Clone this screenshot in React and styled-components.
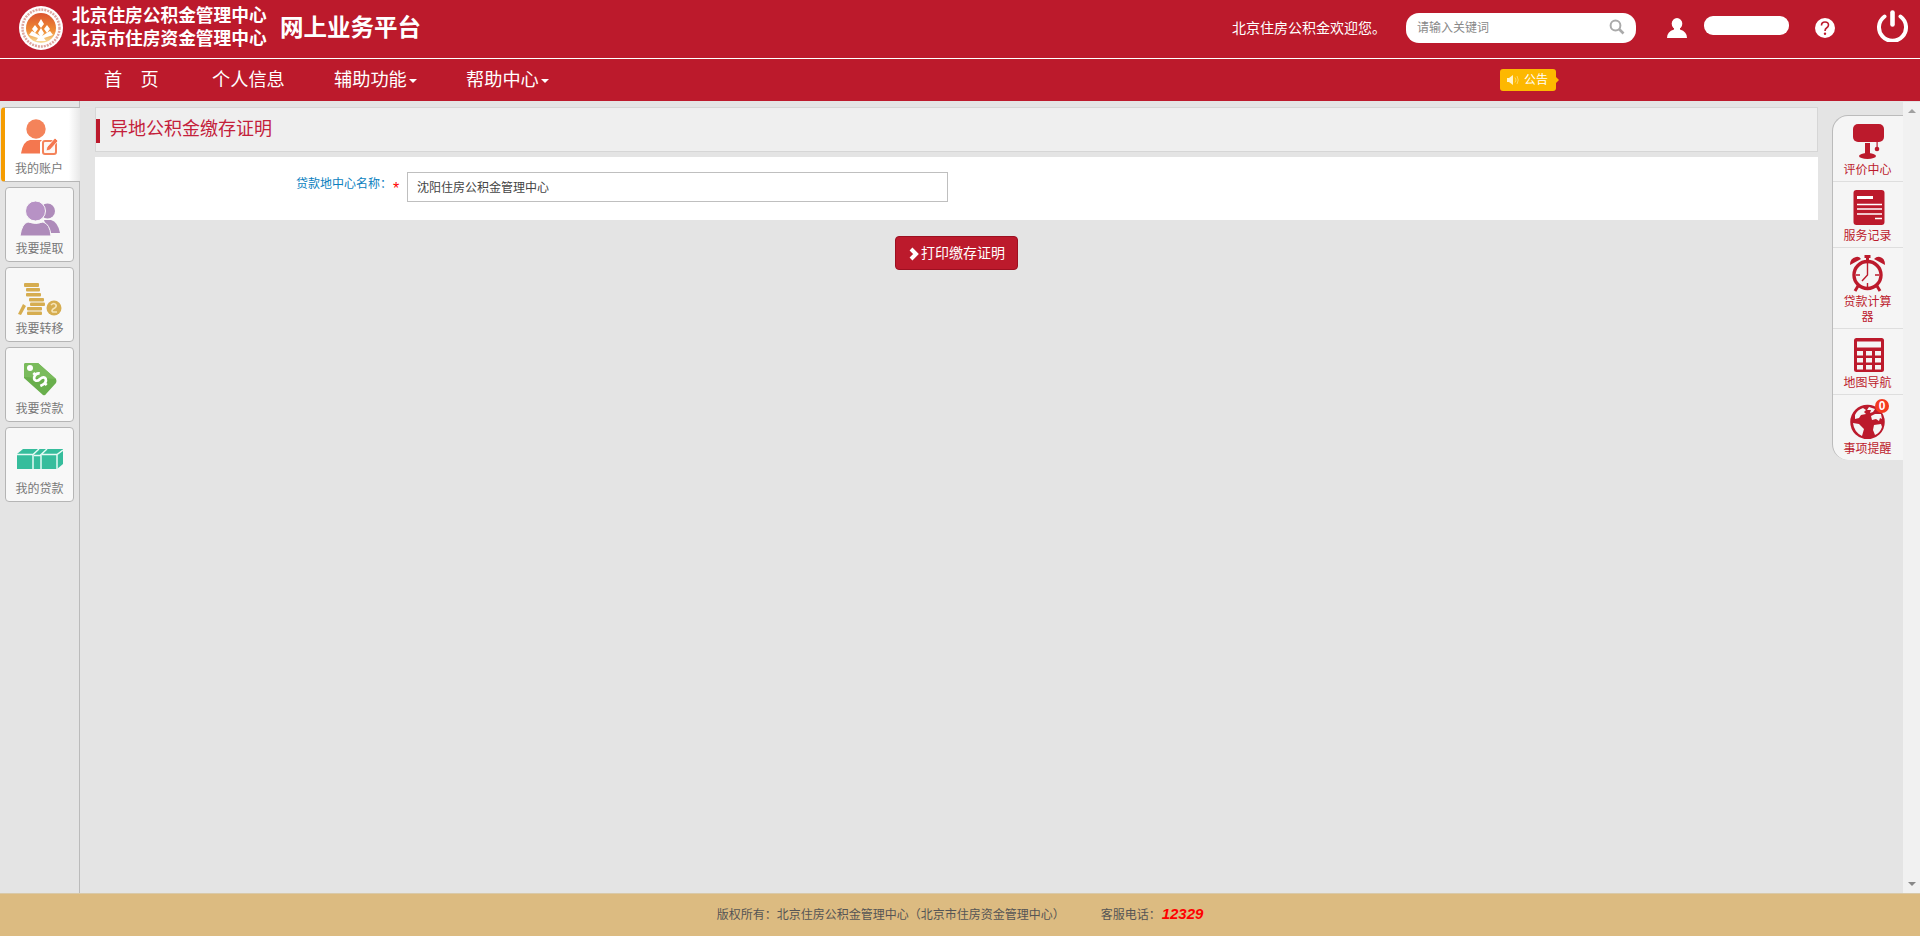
import React from 'react';
import styled, { createGlobalStyle } from 'styled-components';

const RED = '#bc1a2c';

const Global = createGlobalStyle`
  * { box-sizing: border-box; }
  body {
    margin: 0;
    overflow: hidden;
    background: #e4e4e4;
    font: 12px/17px "Liberation Sans", "Noto Sans CJK SC", sans-serif;
    color: #555;
  }
  button, input { font: inherit; }
`;

const Page = styled.div`
  display: flex;
  flex-direction: column;
  height: 936px;
`;

const Header = styled.header`
  display: flex;
  height: 59px;
  padding-left: 19px;
  background: ${RED};
  border-bottom: 1px solid #fff;
  color: #fff;
`;

const Logo = styled.svg`
  width: 44px;
  height: 44px;
  margin-top: 6px;
`;

const Names = styled.div`
  width: 196px;
  margin: 5px 12px 0 9px;
  font-size: 17.7px;
  line-height: 23px;
  font-weight: 700;
  white-space: nowrap;
`;

const Platform = styled.div`
  padding-top: 10px;
  font-size: 23.5px;
  line-height: 36px;
  font-weight: 700;
  white-space: nowrap;
`;

const Tools = styled.div`
  display: flex;
  align-items: flex-start;
  margin-left: auto;
`;

const Welcome = styled.span`
  margin: 20px 20px 0 0;
  font-size: 14px;
  white-space: nowrap;
`;

const Search = styled.label`
  display: flex;
  align-items: center;
  width: 230px;
  height: 30px;
  margin: 13px 31px 0 0;
  padding: 0 11px 0 11px;
  border-radius: 13px;
  background: #fff;
`;

const SearchInput = styled.input`
  flex: 1;
  min-width: 0;
  padding: 0;
  border: 0;
  outline: 0;
  background: none;
  &::placeholder { color: #888; opacity: 1; }
`;

const Icon = styled.svg`
  flex: none;
  display: block;
  width: ${p => p.$w}px;
  height: ${p => p.$h || p.$w}px;
  margin: ${p => p.$m || 0};
`;

const UserName = styled.div`
  width: 85px;
  height: 19px;
  margin: 16px 26px 0 17px;
  border-radius: 9px;
  background: #fff;
`;

const Nav = styled.nav`
  display: flex;
  height: 42px;
  padding-left: 104px;
  background: ${RED};
  color: #fff;
`;

const NavItem = styled.a`
  display: flex;
  align-items: center;
  height: 42px;
  width: ${p => p.$w}px;
  font-size: 18.2px;
  white-space: pre;
`;

const Caret = styled.i`
  margin: 1px 0 0 2px;
  border: 4px solid transparent;
  border-top-color: currentColor;
  border-bottom: 0;
`;

const Notice = styled.div`
  position: relative;
  display: flex;
  align-items: center;
  width: 56px;
  height: 22px;
  margin: 10px 0 0 903px;
  padding-left: 7px;
  gap: 5px;
  border-radius: 3px;
  background: #fdb800;
  &::after {
    content: "";
    position: absolute;
    left: 56px;
    top: 8px;
    border: 3px solid transparent;
    border-left-color: #fdb800;
    border-right: 0;
  }
`;

const Body = styled.div`
  display: flex;
  height: 792px;
`;

const Side = styled.aside`
  display: flex;
  flex-direction: column;
  gap: 5px;
  width: 80px;
  padding-top: 6px;
  border-right: 1px solid #bbb;
`;

const SideItem = styled.a`
  display: flex;
  flex-direction: column;
  align-items: center;
  gap: 3px;
  flex: none;
  height: 75px;
  width: 69px;
  margin-left: 5px;
  padding-top: 8px;
  border: 1px solid #b5b5b5;
  border-radius: 4px;
  background: #f8f8f8;
  color: #777;
  ${p => p.$active && `
    width: 79px;
    margin-left: 1px;
    padding-right: 7px;
    border-left: 4px solid #f59c00;
    border-right: 0;
    border-radius: 4px 0 0 4px;
    background: linear-gradient(90deg, #fff 85%, #e8e8e8);
  `}
`;

const Main = styled.main`
  width: 1723px;
  margin-left: 15px;
  padding-top: 6px;
`;

const TitleBar = styled.div`
  display: flex;
  height: 45px;
  padding-top: 11px;
  border: 1px solid #d6d6d6;
  background: #efefef;
`;

const Title = styled.h1`
  height: 24px;
  margin: 0;
  padding-left: 10px;
  border-left: 4px solid ${RED};
  font-size: 18px;
  line-height: 21px;
  font-weight: 400;
  color: #c4213b;
`;

const FormPanel = styled.div`
  display: flex;
  height: 63px;
  margin-top: 5px;
  padding: 15px 0 0 201px;
  background: #fff;
`;

const Label = styled.label`
  width: 91px;
  padding-top: 4px;
  color: #0b7fc0;
  white-space: nowrap;
`;

const Star = styled.span`
  width: 20px;
  padding: 8px 0 0 6px;
  font-size: 16px;
  color: #f00;
`;

const Field = styled.input`
  width: 541px;
  height: 30px;
  padding: 0 9px 1px;
  border: 1px solid #bfbfbf;
  color: #444;
`;

const PrintButton = styled.button`
  display: flex;
  align-items: center;
  width: 123px;
  height: 34px;
  margin: 16px 0 0 800px;
  padding: 0 0 0 13px;
  gap: 2px;
  border: 1px solid #9c1021;
  border-radius: 4px;
  background: ${RED};
  color: #fff;
  font-size: 14px;
  white-space: nowrap;
`;

const Quick = styled.aside`
  align-self: flex-start;
  width: 71px;
  margin: 14px 0 0 14px;
  border: 1px solid #bbb;
  border-width: 1px 0 0 1px;
  border-radius: 16px 0 0 16px;
  background: #f5f5f5;
`;

const QuickItem = styled.a`
  position: relative;
  display: flex;
  flex-direction: column;
  align-items: center;
  gap: 3px;
  height: ${p => p.$h || 66}px;
  padding: 6px 11px 0 10px;
  border-bottom: 1px solid #dedede;
  line-height: 15px;
  text-align: center;
  color: ${RED};
  &:last-child { height: 65px; border-bottom: 0; }
`;

const Badge = styled.b`
  position: absolute;
  top: 4px;
  left: 42px;
  width: 14px;
  height: 14px;
  border-radius: 50%;
  background: #f43a20;
  color: #fff;
  font-size: 12px;
  line-height: 14px;
`;

const Scroll = styled.div`
  display: flex;
  flex-direction: column;
  justify-content: space-between;
  align-items: center;
  width: 17px;
  margin-top: 1px;
  padding: 7px 0 7px;
  background: #f1f1f1;
`;

const Arrow = styled.i`
  border: 4px solid transparent;
  ${p => p.$up ? 'border-bottom-color: #a0a0a0; border-top: 0;' : 'border-top-color: #888; border-bottom: 0;'}
`;

const Footer = styled.footer`
  display: flex;
  justify-content: center;
  height: 43px;
  padding-top: 13px;
  border-top: 1px solid #d9c9a8;
  background: #dcbb81;
  color: #555;
`;

const Phone = styled.b`
  margin: -2px 0 0 1px;
  font-size: 15px;
  font-style: italic;
  color: #f00;
`;

const Support = styled.span`
  margin-left: 36px;
`;

const AccountIcon = () => (
  <Icon $w={42} viewBox="0 0 42 42">
    <circle cx="18" cy="13" r="9.700" fill="#f4835a" />
    <path d="M3 37.500 Q5 25 12 24 H24 L22 26 V37.500Z" fill="#f4774f" />
    <rect x="25" y="25" width="13" height="13" rx="2" fill="#fdf8f5" stroke="#f4835a" strokeWidth="2" />
    <path d="M28 35 l1-4 8-9 3 3-8 9z" fill="#f4774f" stroke="#fff" strokeWidth=".8" />
  </Icon>
);

const WithdrawIcon = () => (
  <Icon $w={42} viewBox="0 0 42 42">
    <circle cx="28.500" cy="15" r="7.500" fill="#ae8bba" />
    <path d="M25 24 H32 Q39 26 41 37 H30Z" fill="#ae8bba" />
    <circle cx="16.500" cy="15" r="10" fill="#b792c5" stroke="#f8f8f8" />
    <path d="M1 40 Q3 27 9 26 Q17 29 24 26 Q31 28 32 40Z" fill="#ae8bba" stroke="#f8f8f8" />
  </Icon>
);

const TransferIcon = () => (
  <Icon $w={46} $h={42} viewBox="0 0 46 42">
    <g fill="#d6ad50">
      <rect x="7" y="7" width="15" height="4" rx="1" />
      <rect x="9" y="12" width="14" height="3.500" rx="1" />
      <rect x="9" y="17" width="15" height="3.500" rx="1" />
      <rect x="12" y="22" width="15" height="3.500" rx="1" />
      <rect x="13" y="26.500" width="15" height="3.500" rx="1" />
      <rect x="10" y="31" width="15" height="3.500" rx="1" />
      <rect x="10" y="35.500" width="15" height="3.500" rx="1" />
      <path d="M6 28 l3 2-5 9-3-1z" />
      <circle cx="37" cy="32" r="7.500" />
    </g>
    <path d="M34 29 q3-3 5 0 q1 2-3 4 q-2 2 0 3 h4" fill="none" stroke="#f5e3b5" strokeWidth="1.700" />
  </Icon>
);

const LoanIcon = () => (
  <Icon $w={42} viewBox="0 0 42 42">
    <path d="M5 9 Q5 7 7 7 H19 L37 23 Q38 25 37 27 L27 38 Q26 40 24 39 L5 22Z" fill="#69af4c" />
    <path d="M5 9 Q5 7 7 7 H19 L37 23 L5 21Z" fill="#7abb5c" />
    <circle cx="11" cy="12" r="3" fill="#fff" />
    <g transform="translate(21 23) rotate(-48)" fill="none" stroke="#fff" strokeWidth="2.700">
      <path d="M4 -4 Q2 -7 -1 -6 Q-5 -5 -4 -2 Q-3 0 0 0 Q5 1 4 4 Q2 8 -5 5 M0 -9 V-5 M0 5 V9" />
    </g>
  </Icon>
);

const MyLoanIcon = () => (
  <Icon $w={46} $h={42} viewBox="0 0 46 42">
    <path d="M0 18 L6 13 H46 V28 L40 33 H0Z" fill="#36bd9c" />
    <path d="M0 18.500 H16 L22 13 M17 19.500 H23 L30 13 M25 18.500 H40 L46 14 M40 18.500 V33 M16 33 V18 M24 33 V18" fill="none" stroke="#e5faf4" strokeWidth="1.500" />
  </Icon>
);

const ReviewIcon = () => (
  <Icon $w={38} viewBox="0 0 38 38" fill={RED}>
    <rect x="4" y="2" width="31" height="18" rx="5" />
    <path d="M16 21 h5 v11 h-5z" />
    <ellipse cx="18.500" cy="34" rx="8.500" ry="3" />
    <path d="M27.500 18 h1.200 v7 h-1.200z" />
    <circle cx="28" cy="27" r="2.300" />
  </Icon>
);

const RecordIcon = () => (
  <Icon $w={38} viewBox="0 0 38 38">
    <rect x="4.500" y="2" width="31" height="35" rx="3" fill={RED} />
    <path d="M8 9.500 H24" stroke="#fff" strokeWidth="3" />
    <path d="M8 16.500 H33 M8 21 H33 M8 26 H33 M26 30.500 H33" stroke="#fff" strokeWidth="1.500" />
  </Icon>
);

const ClockIcon = () => (
  <Icon $w={38} viewBox="0 0 38 38">
    <g fill="none" stroke={RED}>
      <circle cx="18.500" cy="21" r="13.500" strokeWidth="3.400" />
      <path d="M18.500 2 V7 M15.500 2.500 H21.500 M9 32 L6 37 M28 32 L31 37" strokeWidth="3" />
      <path d="M18.500 9 V21 L13 27 M18.500 33 V29 M7 21 H11 M26 21 H30" strokeWidth="1.400" />
    </g>
    <path d="M1 11 Q1 4 7 3 Q10 2 12 5Z M25 5 Q28 2 31 3 Q36 4 36 11Z" fill={RED} />
  </Icon>
);

const CalculatorIcon = () => (
  <Icon $w={38} viewBox="0 0 38 38">
    <rect x="5" y="3" width="30" height="34" rx="2.500" fill={RED} />
    <g fill="#f5f5f5">
      <rect x="8" y="6.500" width="24" height="6" />
      {[16, 23, 30].map(y => [8, 17, 26].map(x => <rect key={`${x}-${y}`} x={x} y={y} width="6" height="4.500" />))}
    </g>
  </Icon>
);

const GlobeIcon = () => (
  <Icon $w={38} viewBox="0 0 38 38">
    <circle cx="18.500" cy="21" r="16" fill={RED} stroke={RED} strokeWidth="2.500" />
    <path d="M6 14 Q8 9 14 7 L17 9 L15 11 L17 13 L12 14 L10 17 L6 18Z M4 22 L10 23 L15 28 L13 35 Q5 31 4 22Z M20 6 L26 8 L24 11 L21 12 L22 9 L18 9Z M22 15 L26 13 L32 13 L33 18 L31 17 L30 20 L27 18 L23 19Z M25 24 L32 23 L33 26 Q31 32 26 34 L24 29Z" fill="#f5f5f5" />
  </Icon>
);

const sideItems = [
  ['我的账户', AccountIcon],
  ['我要提取', WithdrawIcon],
  ['我要转移', TransferIcon],
  ['我要贷款', LoanIcon],
  ['我的贷款', MyLoanIcon],
];

const quickItems = [
  ['评价中心', ReviewIcon],
  ['服务记录', RecordIcon],
  ['贷款计算器', ClockIcon, 81],
  ['地图导航', CalculatorIcon],
  ['事项提醒', GlobeIcon, 66, '0'],
];

export default function App() {
  return (
    <Page>
      <Global />
      <Header>
        <Logo viewBox="0 0 44 44">
          <defs>
            <linearGradient id="emblem" x2="0" y2="1">
              <stop stopColor="#dc5530" />
              <stop offset=".6" stopColor="#ef8c35" />
              <stop offset="1" stopColor="#f8e2a0" />
            </linearGradient>
          </defs>
          <circle cx="22" cy="22" r="22" fill="#fff" />
          <circle cx="22" cy="22" r="18.500" fill="none" stroke="#dfa79f" strokeWidth="2.500" strokeDasharray="2 1" />
          <circle cx="22" cy="22" r="15" fill="url(#emblem)" />
          <path d="M22 13 l3 5-3 4-3-4z M16 19 l3 4-3 4-3-4z M28 19 l3 4-3 4-3-4z M22 22 l3 5-2 3 8-5 3 4-9 3 2 3h-10l2-3-9-3 3-4 8 5-2-3z" fill="#fff" />
        </Logo>
        <Names>
          <div>北京住房公积金管理中心</div>
          <div>北京市住房资金管理中心</div>
        </Names>
        <Platform>网上业务平台</Platform>
        <Tools>
          <Welcome>北京住房公积金欢迎您。</Welcome>
          <Search>
            <SearchInput placeholder="请输入关键词" />
            <Icon $w={16} $m="-3px 0 0" viewBox="0 0 16 16" fill="none" stroke="#aaa" strokeWidth="2">
              <circle cx="6.500" cy="6.500" r="4.900" />
              <path d="M10 10 L14.500 14.500" strokeWidth="2.600" />
            </Icon>
          </Search>
          <Icon $w={20} $m="18px 0 0" viewBox="0 0 20 20" fill="#fff">
            <ellipse cx="10" cy="5.700" rx="5.300" ry="5.700" />
            <path d="M7 10 H13 V11.500 Q20 13.500 20 20 H0 Q0 13.500 7 11.500Z" />
          </Icon>
          <UserName />
          <Icon $w={20} $m="18px 41px 0 0" viewBox="0 0 20 20">
            <circle cx="10" cy="10" r="10" fill="#fff" />
            <path d="M6.500 7.500 Q6.500 4 10 4 Q13.500 4 13.500 7 Q13.500 8.600 11.500 10 Q10 11 10 13" fill="none" stroke={RED} strokeWidth="1.600" />
            <circle cx="10" cy="15.700" r="1.200" fill={RED} />
          </Icon>
          <Icon $w={32} $m="10px 12px 0 0" viewBox="0 0 32 32" fill="none" stroke="#fff" strokeWidth="4" strokeLinecap="round">
            <path d="M8.500 6.500 A13.500 13.500 0 1 0 24.500 6.500" />
            <path d="M16.500 2.500 V14.500" strokeWidth="4.600" />
          </Icon>
        </Tools>
      </Header>
      <Nav>
        <NavItem $w={108}>首　页</NavItem>
        <NavItem $w={122}>个人信息</NavItem>
        <NavItem $w={132}>辅助功能<Caret /></NavItem>
        <NavItem $w={131}>帮助中心<Caret /></NavItem>
        <Notice>
          <Icon $w={12} viewBox="0 0 12 12">
            <path d="M0 4 H2 L6 1 V11 L2 8 H0Z" fill="#fff3c8" />
            <path d="M8 3.500 Q10 6 8 8.500 M10 2 Q12.500 6 10 10" fill="none" stroke="#fdd766" />
          </Icon>
          公告
        </Notice>
      </Nav>
      <Body>
        <Side>
          {sideItems.map(([label, Glyph], i) => (
            <SideItem key={label} $active={i === 0}><Glyph />{label}</SideItem>
          ))}
        </Side>
        <Main>
          <TitleBar><Title>异地公积金缴存证明</Title></TitleBar>
          <FormPanel>
            <Label htmlFor="center">贷款地中心名称：</Label>
            <Star>*</Star>
            <Field id="center" defaultValue="沈阳住房公积金管理中心" />
          </FormPanel>
          <PrintButton>
            <Icon $w={10} $h={14} $m="2px 0 0" viewBox="0 0 10 14" fill="none" stroke="#fff" strokeWidth="4">
              <path d="M2 2 L7 7 L2 12" />
            </Icon>
            打印缴存证明
          </PrintButton>
        </Main>
        <Quick>
          {quickItems.map(([label, Glyph, h, count]) => (
            <QuickItem key={label} $h={h}><Glyph />{label}{count && <Badge>{count}</Badge>}</QuickItem>
          ))}
        </Quick>
        <Scroll><Arrow $up /><Arrow /></Scroll>
      </Body>
      <Footer>
        <span>版权所有：北京住房公积金管理中心（北京市住房资金管理中心）</span>
        <Support>客服电话：</Support>
        <Phone>12329</Phone>
      </Footer>
    </Page>
  );
}
